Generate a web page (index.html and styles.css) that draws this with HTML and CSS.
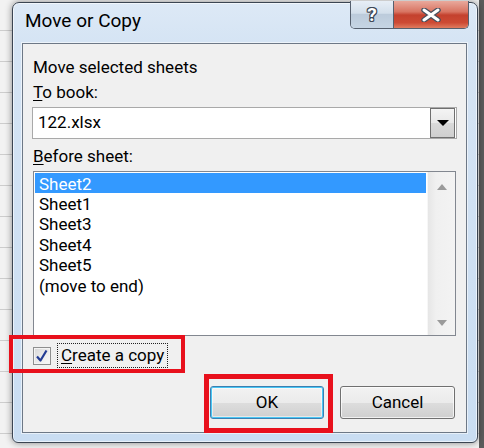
FILE: index.html
```html
<!DOCTYPE html>
<html>
<head>
<meta charset="utf-8">
<title>Move or Copy</title>
<link rel="stylesheet" href="styles.css">
</head>
<body>
<div class="desk">
  <div class="window">
    <div class="titlebar">
      <span class="title">Move or Copy</span>
      <div class="caption">
        <div class="cap help"><span class="help-glyph">?</span></div>
        <div class="cap close">
          <svg class="close-x" width="20" height="14" viewBox="0 0 20 14">
            <path d="M3 2 L17 12 M17 2 L3 12" stroke="#46505e" stroke-width="5.5" stroke-linecap="round"/>
            <path d="M3 2 L17 12 M17 2 L3 12" stroke="#ffffff" stroke-width="3" stroke-linecap="round"/>
          </svg>
        </div>
      </div>
    </div>
    <div class="client">
      <div class="lbl lbl-first">Move selected sheets</div>
      <div class="lbl lbl-book"><u>T</u>o book:</div>
      <div class="combo">
        <span class="combo-value">122.xlsx</span>
        <span class="combo-btn">
          <svg width="12" height="6" viewBox="0 0 12 6"><polygon points="0,0 12,0 6,6" fill="#000"/></svg>
        </span>
      </div>
      <div class="lbl lbl-before"><u>B</u>efore sheet:</div>
      <div class="listbox">
        <ul class="items">
          <li class="item sel">Sheet2</li>
          <li class="item">Sheet1</li>
          <li class="item">Sheet3</li>
          <li class="item">Sheet4</li>
          <li class="item">Sheet5</li>
          <li class="item">(move to end)</li>
        </ul>
        <div class="vscroll">
          <svg width="10" height="6" viewBox="0 0 10 6"><polygon points="0,6 5,0 10,6" fill="#9a9a9a"/></svg>
          <svg width="10" height="6" viewBox="0 0 10 6"><polygon points="0,0 10,0 5,6" fill="#9a9a9a"/></svg>
        </div>
      </div>
      <div class="check-row">
        <span class="checkbox">
          <svg width="16" height="16" viewBox="0 0 16 16"><path d="M3 8.5 L6.5 12.5 L12.5 2.5" fill="none" stroke="#233c94" stroke-width="2.2" stroke-linejoin="round"/></svg>
        </span>
        <span class="check-label"><u>C</u>reate a copy</span>
      </div>
      <div class="buttons">
        <button class="btn btn-ok">OK</button>
        <button class="btn btn-cancel">Cancel</button>
      </div>
    </div>
    <div class="mark mark-check"></div>
    <div class="mark mark-ok"></div>
  </div>
</div>
</body>
</html>
```

FILE: styles.css
```css
* { box-sizing: border-box; }
html, body { margin: 0; padding: 0; }
body {
  width: 484px;
  height: 448px;
  overflow: hidden;
  font-family: Roboto, "Open Sans", sans-serif;
  color: #000;
  background:
    linear-gradient(to right, transparent 479px, #5c5c5c 479px),
    repeating-linear-gradient(to bottom, transparent 0 30px, #cdcdcd 30px 31px),
    #f2f2f2;
}
.desk { padding: 2px 0 0 12px; }

.window {
  position: relative;
  width: 466px;
  height: 441px;
  border: 1px solid #3b4552;
  border-radius: 7px 7px 6px 6px;
  padding: 0 10px 0 9px;
  background: linear-gradient(to bottom, #dde9f6 0, #d5e4f4 40px, #c9ddf2 100%);
  box-shadow: inset 0 0 0 1px rgba(255,255,255,.6), 0 0 7px rgba(0,0,0,.45);
}

.titlebar {
  height: 40px;
  display: flex;
  align-items: flex-start;
}
.title {
  padding: 5px 0 0 3px;
  font-size: 19px;
  line-height: 26px;
  color: #000;
}
.caption {
  margin: -2px -2px 0 auto;
  display: flex;
  height: 28px;
  border: 1px solid #56606e;
  border-top: none;
  border-radius: 0 0 5px 5px;
  overflow: hidden;
}
.cap {
  height: 100%;
  display: flex;
  align-items: center;
  justify-content: center;
}
.help {
  width: 43px;
  border-right: 1px solid #56606e;
  background: linear-gradient(to bottom, #e7eef6 0, #d3dfeb 45%, #bccbdb 50%, #c6d5e4 100%);
}
.help-glyph {
  font-size: 19px;
  font-weight: 700;
  line-height: 1;
  color: #fff;
  text-shadow: 1px 0 #3d4756, -1px 0 #3d4756, 0 1px #3d4756, 0 -1px #3d4756,
               1px 1px #3d4756, -1px -1px #3d4756, 1px -1px #3d4756, -1px 1px #3d4756;
}
.close {
  width: 74px;
  background: linear-gradient(to bottom, #e9a99c 0, #d87462 40%, #c4412e 52%, #cd4a34 80%, #e07b5f 100%);
}

.client {
  height: 390px;
  border: 1px solid #6d7886;
  box-shadow: 0 0 0 1px rgba(255,255,255,.55);
  background: #f0f0f0;
  padding: 13px 10px 0 10px;
  font-size: 17px;
}
.lbl {
  height: 20px;
  line-height: 20px;
  white-space: nowrap;
}
.lbl-book { margin-top: 5px; }
.lbl-before { margin-top: 7px; }
u { text-underline-offset: 2px; }

.combo {
  margin: 5px -1px 0 -1px;
  height: 32px;
  border: 1px solid #a9a9a9;
  background: #fff;
  display: flex;
  align-items: flex-start;
}
.combo-value {
  flex: 1;
  padding-left: 5px;
  line-height: 28px;
}
.combo-btn {
  width: 25px;
  height: 30px;
  margin-right: 1px;
  border: 1px solid #6f6f6f;
  background: linear-gradient(to bottom, #f4f4f4 0, #e8e8e8 50%, #d9d9d9 51%, #cfcfcf 100%);
  display: flex;
  align-items: center;
  justify-content: center;
}

.listbox {
  margin-top: 5px;
  height: 165px;
  border: 1px solid #828790;
  background: #fff;
  display: flex;
}
.items {
  flex: 1;
  list-style: none;
  margin: 0;
  padding: 1px;
}
.item {
  height: 20.4px;
  line-height: 22px;
  padding-left: 4px;
  white-space: nowrap;
}
.item.sel {
  height: 20px;
  background: #3399ff;
  color: #fff;
}
.vscroll {
  width: 28px;
  background: linear-gradient(to right, #e6e6e6 0, #f0f0f0 30%, #f3f3f3 100%);
  border-left: 1px solid #f7f7f7;
  display: flex;
  flex-direction: column;
  justify-content: space-between;
  align-items: center;
  padding: 12px 0 9px 0;
}

.check-row {
  margin-top: 7px;
  height: 25px;
  display: flex;
  align-items: flex-start;
}
.checkbox {
  margin-top: 4px;
  width: 18px;
  height: 18px;
  border: 1px solid #8e8f8f;
  background: linear-gradient(to bottom right, #d8d8d8 0, #eeeeee 60%, #f8f8f8 100%);
  box-shadow: inset 0 0 0 1px #f4f4f4;
  display: flex;
  align-items: center;
  justify-content: center;
}
.check-label {
  margin-left: 6px;
  height: 25px;
  line-height: 23px;
  padding: 0 3px;
  border: 1px dotted #202020;
  white-space: nowrap;
}

.buttons {
  margin: 18px 1px 0 0;
  display: flex;
  justify-content: flex-end;
  gap: 16px;
}
.btn {
  height: 33px;
  padding: 0;
  font-family: inherit;
  font-size: 17px;
  line-height: 31px;
  color: #000;
  border: 1px solid #707070;
  border-radius: 3px;
  background: linear-gradient(to bottom, #f2f2f2 0, #ebebeb 50%, #dddddd 51%, #cfcfcf 100%);
  box-shadow: inset 0 0 0 1px rgba(255,255,255,.7);
}
.btn-ok {
  width: 114px;
  border-color: #3c7fb1;
  box-shadow: inset 0 0 0 1px #48c6f4, inset 0 0 0 2px rgba(255,255,255,.5);
}
.btn-cancel { width: 115px; }

.mark {
  position: absolute;
  border-style: solid;
  border-color: #e8101c;
}
.mark-check {
  left: -4px;
  top: 332px;
  width: 176px;
  height: 38px;
  border-width: 4px;
}
.mark-ok {
  left: 191px;
  top: 371px;
  width: 129px;
  height: 59px;
  border-width: 5px;
}
```
